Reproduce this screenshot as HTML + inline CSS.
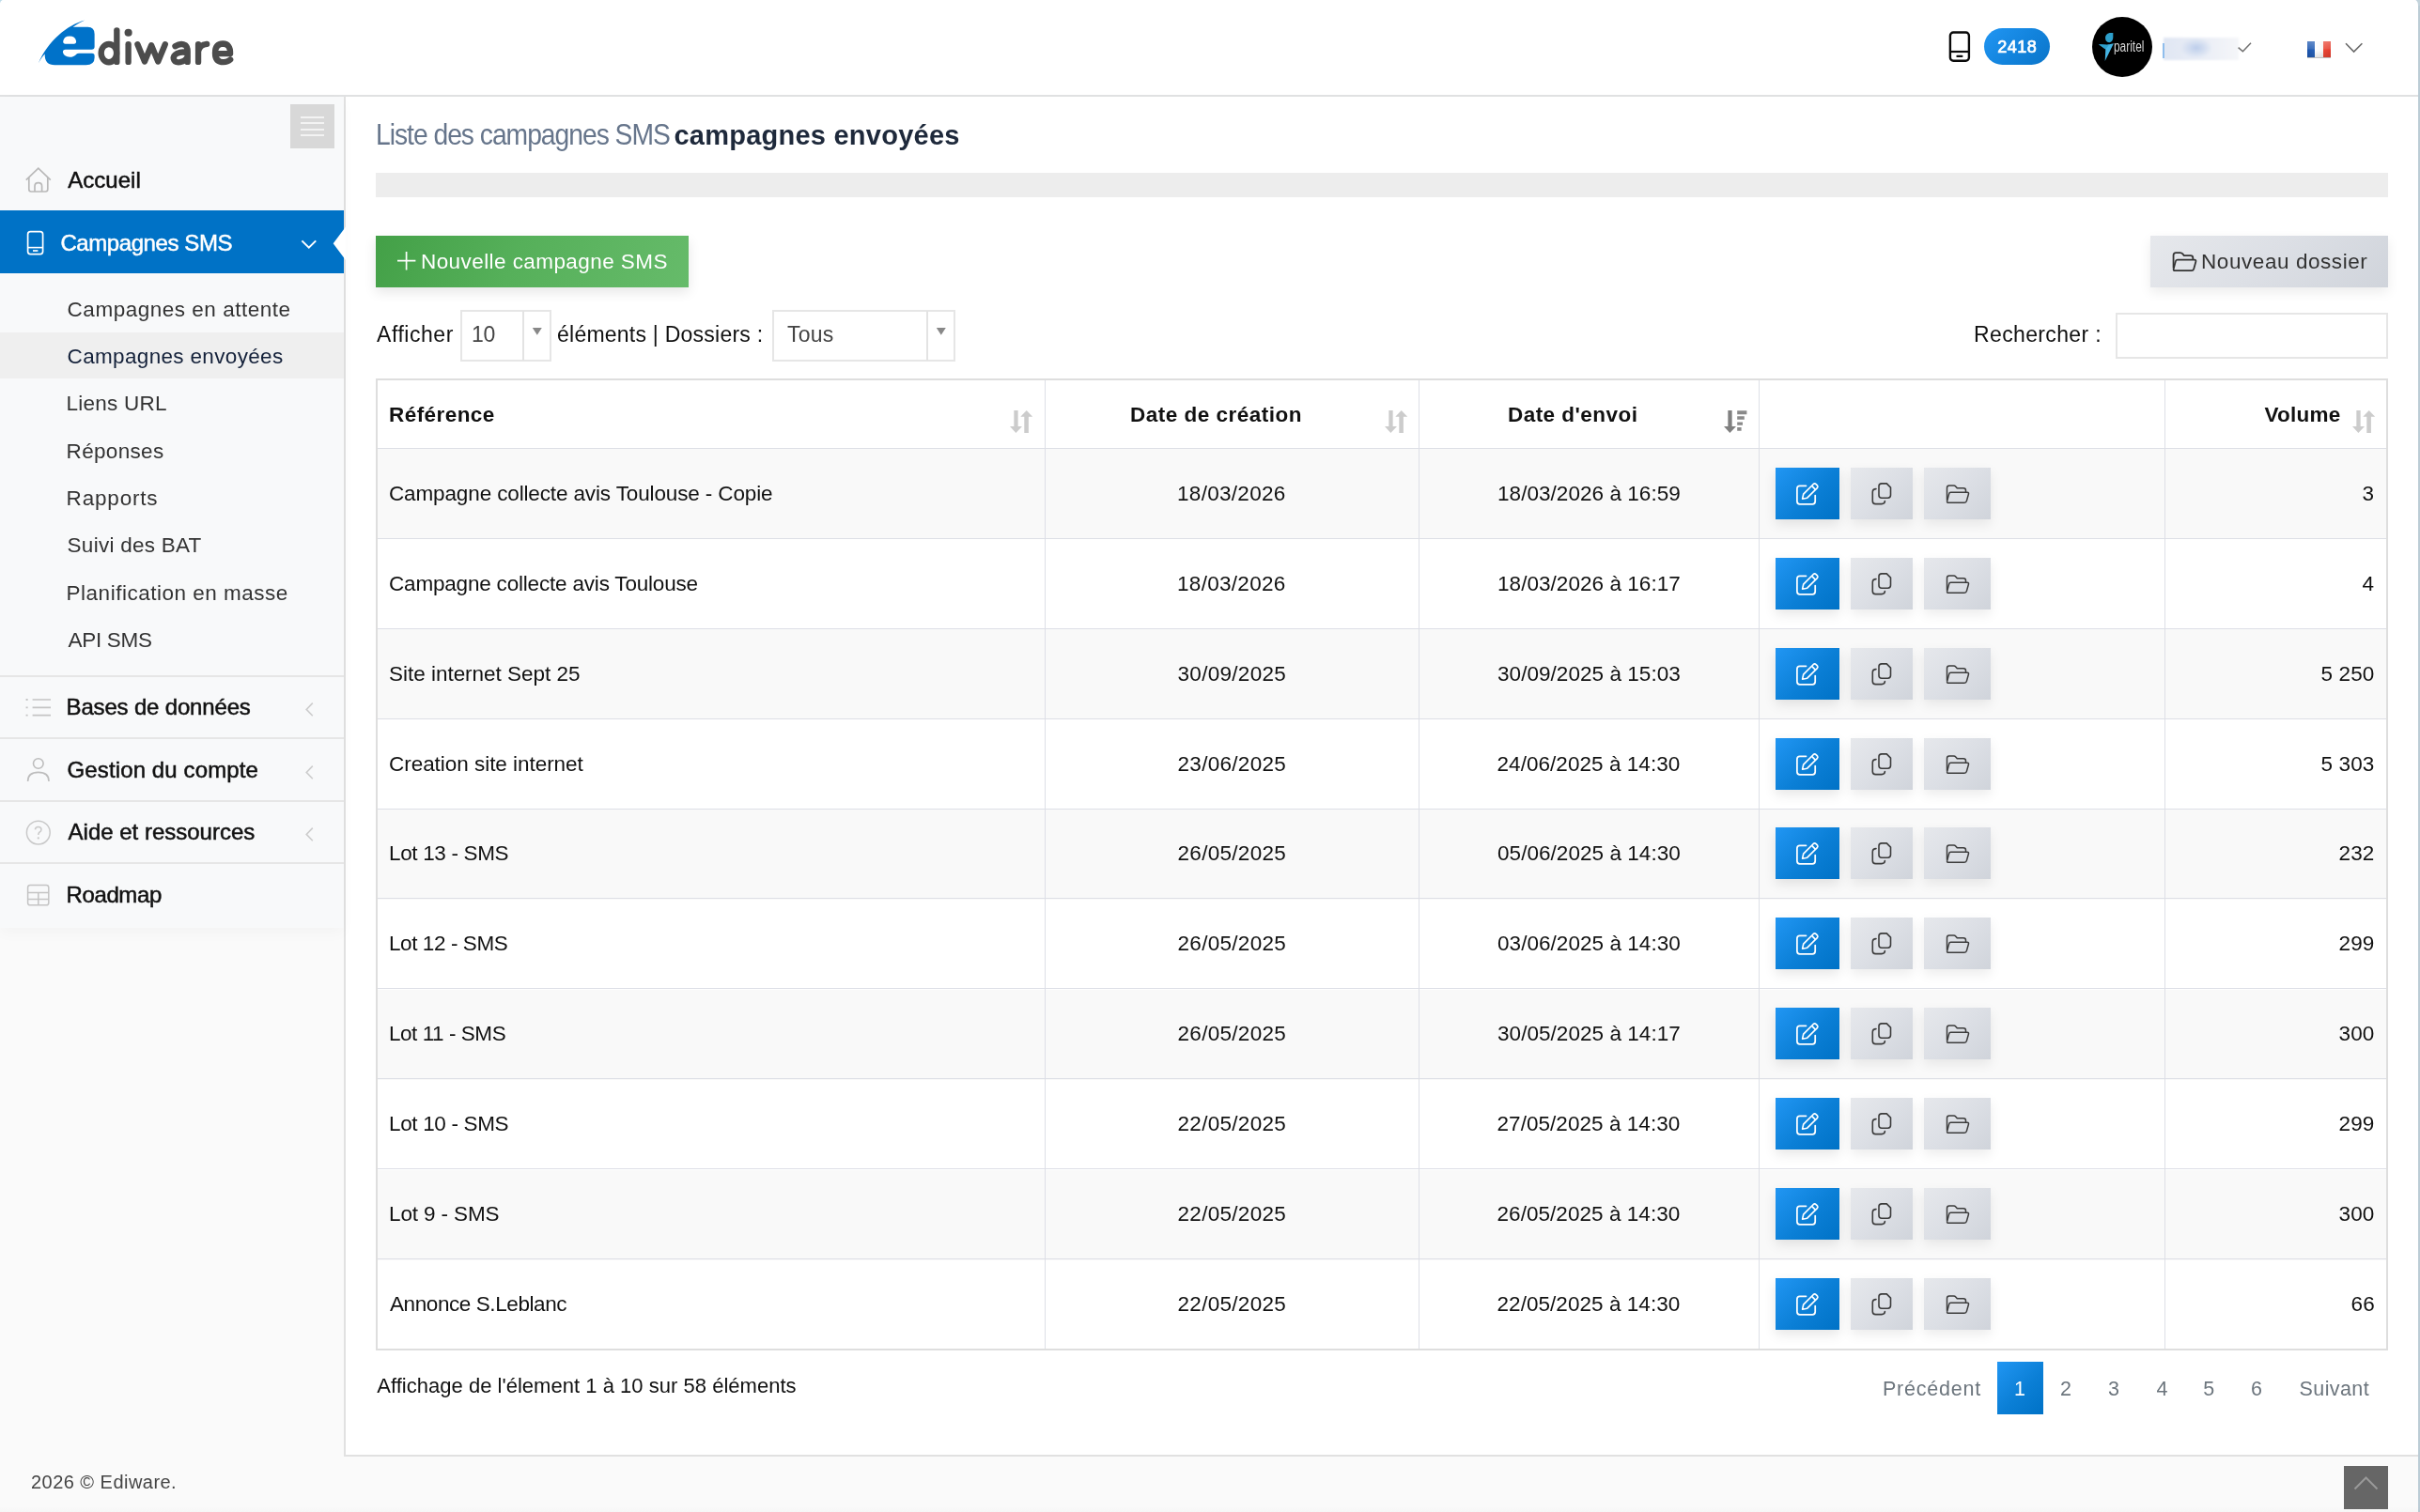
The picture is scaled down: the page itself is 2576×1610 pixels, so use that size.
<!DOCTYPE html>
<html lang="fr">
<head>
<meta charset="utf-8">
<title>Ediware - Campagnes SMS envoyées</title>
<style>
*{box-sizing:border-box}
html,body{margin:0;padding:0}
body{width:2576px;height:1610px;overflow:hidden;background:#fafafa;font-family:"Liberation Sans",sans-serif;position:relative}
.a{position:absolute}
.t{position:absolute;white-space:nowrap;line-height:1;transform-origin:0 0;z-index:5}
#hdr{left:0;top:0;width:2576px;height:103px;background:#fff;border-bottom:2px solid #e0e1e2}
#side{left:0;top:103px;width:366px;height:885px;background:#f8f9fa;box-shadow:0 6px 14px rgba(0,0,0,.028)}
#main{left:366px;top:103px;width:2208px;height:1448px;background:#fff;border-left:2px solid #e1e1e1;border-bottom:2px solid #e1e1e1}
.sep{left:0;width:366px;height:2px;background:#e6e6e6}
.row{left:402px;width:2138px;height:96px}
.odd{background:#f9f9f9}
.hl{left:402px;width:2138px;height:1px;background:#dddfe6}
.vl{top:405px;width:1px;height:1031px;background:#dddfe6}
.bb{width:68px;height:55px;background:linear-gradient(135deg,#2196f3 0%,#0b7fd6 55%,#0072c6 100%);box-shadow:0 5px 12px rgba(0,0,0,.10)}
.bg{height:55px;background:linear-gradient(135deg,#e6e8ec 0%,#dcdfe5 50%,#d0d4db 100%);box-shadow:0 5px 12px rgba(0,0,0,.08)}
svg{position:absolute;overflow:visible}
</style>
</head>
<body>
<!-- ===== HEADER ===== -->
<div class="a" id="hdr"></div>
<svg style="left:30px;top:10px" width="240" height="80" viewBox="0 0 2420 807"><path fill="#0072c9" fill-rule="evenodd" d="M610 115C420 165 210 340 110 578C130 540 155 500 178 478C175 560 215 597 285 597L620 597Q712 597 712 520L712 500Q712 472 685 472L545 472Q526 472 520 478Q490 512 445 512Q385 510 372 462Q370 430 400 430L680 430Q712 430 712 400L712 265Q712 188 640 188L480 188C520 160 565 135 610 115ZM375 340Q385 287 445 287Q505 287 515 340Q517 370 490 370L400 370Q372 370 375 340Z"/></svg>
<svg style="left:30px;top:10px" width="240" height="80" viewBox="0 0 2420 807"><g fill="none" stroke="#4c4c4c" stroke-width="64" stroke-linecap="round" stroke-linejoin="round"><ellipse cx="866" cy="470" rx="83" ry="97"/><path d="M951 226V564"/><path d="M1075 376V564"/><path d="M1174 376L1250 560L1322 386L1394 560L1470 376"/><path d="M1578 396Q1640 356 1688 386Q1711 406 1711 450V564M1711 466Q1650 450 1600 472Q1554 496 1561 532Q1572 574 1630 567Q1692 556 1711 506"/><path d="M1826 376V564M1826 450Q1840 380 1918 372"/><path d="M2014 476H2169Q2173 370 2090 368Q2007 370 2007 468Q2007 566 2097 566Q2142 566 2170 540"/></g><circle cx="1075" cy="250" r="41" fill="#4c4c4c"/></svg>
<!-- phone icon -->
<svg style="left:2072px;top:30px" width="30" height="40" viewBox="0 0 30 40"><rect x="3.9" y="4.5" width="20" height="30.2" rx="3.4" fill="none" stroke="#0a0a0a" stroke-width="2.4"/><path d="M4 25H24" stroke="#0a0a0a" stroke-width="2.2"/><path d="M11.4 29.9H16.4" stroke="#0a0a0a" stroke-width="2.2" stroke-linecap="round"/></svg>
<div class="a" style="left:2112px;top:30px;width:70px;height:39px;border-radius:20px;background:linear-gradient(135deg,#2196f3 0%,#1283dc 55%,#0b75c9 100%)"></div>
<!-- avatar -->
<div class="a" style="left:2227px;top:18px;width:64px;height:64px;border-radius:50%;background:#000"></div>
<svg style="left:2227px;top:18px" width="64" height="64" viewBox="0 0 64 64"><path fill="#2d9fcb" d="M22.3 17H18.6Q14 18.4 14 22.4Q14.4 27 18.6 27.2Q22 26.4 22.3 22Z"/><path fill="#44b4e3" d="M7 29.2L16 29.7L22.9 28.3L13.7 46.9L14.3 34.6Z"/><path fill="#2d9fcb" d="M7 29.2L16 29.7L18.4 29.2L14.3 34.6Z"/></svg>
<!-- blurred name -->
<div class="a" style="left:2303px;top:40px;width:80px;height:24px;background:radial-gradient(ellipse 17px 11px at 35px 11px,#bccdeb 0%,rgba(200,214,238,.6) 55%,rgba(220,228,243,0) 100%),linear-gradient(90deg,#e0e6f3 0%,#e6ebf5 30%,#edf0f7 65%,#f5f6f9 100%);filter:blur(1.2px)"></div>
<div class="a" style="left:2301.5px;top:46px;width:2px;height:16px;background:#8fbdec;filter:blur(.4px)"></div>
<svg style="left:2380px;top:42px" width="20" height="16" viewBox="0 0 20 16"><path d="M2.6 8.6L7.4 12.8L16 3.8" fill="none" stroke="#707070" stroke-width="1.5"/></svg>
<!-- flag -->
<div class="a" style="left:2456px;top:44px;width:25px;height:17px;background:linear-gradient(180deg,rgba(255,255,255,.28) 0%,rgba(255,255,255,.12) 45%,rgba(0,0,0,0) 55%,rgba(0,0,0,.10) 100%),linear-gradient(90deg,#1b55ae 0,#2a63b8 33%,#fff 34%,#f6f6f6 66%,#ec4a37 67%,#e23b2c 100%);box-shadow:0 1px 0 rgba(0,0,0,.25)"></div>
<svg style="left:2494px;top:43px" width="24" height="16" viewBox="0 0 24 16"><path d="M3 3.2L11.6 12L20.4 3.2" fill="none" stroke="#6a6a6a" stroke-width="1.6"/></svg>

<!-- ===== MAIN AREA ===== -->
<div class="a" id="main"></div>
<div class="a" style="left:400px;top:184px;width:2142px;height:26px;background:#ededed"></div>
<!-- green button -->
<div class="a" style="left:400px;top:251px;width:333px;height:55px;background:linear-gradient(115deg,#43a047 0%,#56b05a 45%,#66bb6a 100%);box-shadow:0 5px 12px rgba(0,0,0,.10)"></div>
<svg style="left:422px;top:267px" width="22" height="22" viewBox="0 0 22 22"><path d="M10.6 1V20.4M1 10.7H20.4" stroke="#fff" stroke-width="1.7" fill="none"/></svg>
<!-- nouveau dossier -->
<div class="a" style="left:2289px;top:251px;width:253px;height:55px;background:linear-gradient(135deg,#e6e8ec 0%,#dcdfe5 50%,#d0d4db 100%);box-shadow:0 5px 12px rgba(0,0,0,.08)"></div>
<svg style="left:2312px;top:267px" width="27" height="23" viewBox="0 0 26 22"><path d="M1.5 17.8V4.5Q1.5 2 4 2H8.5Q10 2 11 3.2L12.3 4.8H19Q21.5 4.8 21.5 7.3V9" fill="none" stroke="#333" stroke-width="1.7"/><path d="M5.5 9.2H23Q25 9.2 24.4 11.2L22.4 18.4Q21.9 20.3 20 20.3H3.2Q1 20.3 1.7 18.2L3.6 11Q4 9.2 5.5 9.2Z" fill="none" stroke="#333" stroke-width="1.7"/></svg>
<!-- selects -->
<div class="a" style="left:490px;top:330px;width:97px;height:55px;background:#fff;border:2px solid #e6e6e6"></div>
<div class="a" style="left:556px;top:331px;width:2px;height:53px;background:#e3e3e3"></div>
<svg style="left:566px;top:348px" width="12" height="10" viewBox="0 0 12 10"><path d="M0.8 1H10.8L5.8 8.8Z" fill="#888"/></svg>
<div class="a" style="left:822px;top:330px;width:195px;height:55px;background:#fff;border:2px solid #e6e6e6"></div>
<div class="a" style="left:986px;top:331px;width:2px;height:53px;background:#e3e3e3"></div>
<svg style="left:996px;top:348px" width="12" height="10" viewBox="0 0 12 10"><path d="M0.8 1H10.8L5.8 8.8Z" fill="#888"/></svg>
<div class="a" style="left:2252px;top:333px;width:290px;height:49px;background:#fff;border:2px solid #e6e6e6"></div>

<!-- ===== TABLE ===== -->
<div class="a" style="left:400px;top:403px;width:2142px;height:1035px;border:2px solid #dedede;background:#fff"></div>
<div class="a row odd" style="top:478px"></div>
<div class="a row odd" style="top:670px"></div>
<div class="a row odd" style="top:862px"></div>
<div class="a row odd" style="top:1054px"></div>
<div class="a row odd" style="top:1246px"></div>
<div class="a hl" style="top:477px"></div>
<div class="a hl" style="top:573px"></div>
<div class="a hl" style="top:669px"></div>
<div class="a hl" style="top:765px"></div>
<div class="a hl" style="top:861px"></div>
<div class="a hl" style="top:956px"></div>
<div class="a hl" style="top:1052px"></div>
<div class="a hl" style="top:1148px"></div>
<div class="a hl" style="top:1244px"></div>
<div class="a hl" style="top:1340px"></div>
<div class="a vl" style="left:1112px"></div>
<div class="a vl" style="left:1510px"></div>
<div class="a vl" style="left:1872px"></div>
<div class="a vl" style="left:2304px"></div>
<svg style="left:1075px;top:436px" width="25" height="26" viewBox="0 0 25 26"><path d="M4.35 1H8.65V18H13L6.4 25L0 18H4.35Z" fill="#ccc"/><path d="M15.3 25H19.9V7.8H24.2L17.7 0.9L11.3 7.8H15.3Z" fill="#ccc"/></svg>
<svg style="left:1474px;top:436px" width="25" height="26" viewBox="0 0 25 26"><path d="M4.35 1H8.65V18H13L6.4 25L0 18H4.35Z" fill="#ccc"/><path d="M15.3 25H19.9V7.8H24.2L17.7 0.9L11.3 7.8H15.3Z" fill="#ccc"/></svg>
<svg style="left:2504px;top:436px" width="25" height="26" viewBox="0 0 25 26"><path d="M4.35 1H8.65V18H13L6.4 25L0 18H4.35Z" fill="#ccc"/><path d="M15.3 25H19.9V7.8H24.2L17.7 0.9L11.3 7.8H15.3Z" fill="#ccc"/></svg>
<svg style="left:1835px;top:436px" width="26" height="26" viewBox="0 0 26 26"><path d="M4.35 1H8.65V18H13L6.4 25L0 18H4.35Z" fill="#808080"/><path d="M14.2 1.2H24.4V5.2H14.2ZM14.2 7.2H21.8V10.8H14.2ZM14.2 13.4H20V16.7H14.2ZM14.2 19H18.6V22.7H14.2Z" fill="#8a8a8a"/></svg>
<div class="a bb" style="left:1890px;top:498px"></div>
<div class="a bg" style="left:1970px;top:498px;width:66px"></div>
<div class="a bg" style="left:2048px;top:498px;width:71px"></div>
<svg style="left:1912px;top:514px" width="24" height="24" viewBox="0 0 24 24"><path d="M10.5 3.3H3.8Q0.9 3.3 0.9 6.3V19.8Q0.9 22.8 3.8 22.8H17.3Q20.2 22.8 20.2 19.8V13.6" fill="none" stroke="#fff" stroke-width="1.75" stroke-linecap="round"/><path d="M6.6 17.2L7.7 12.1L18.3 1.5Q19.7 0.3 21.1 1.6L22.4 2.9Q23.6 4.3 22.3 5.7L11.7 16.2Z" fill="none" stroke="#fff" stroke-width="1.65" stroke-linejoin="round"/><path d="M16.6 3.4L20.5 7.3" stroke="#fff" stroke-width="1.7"/></svg>
<svg style="left:1992px;top:514px" width="22" height="24" viewBox="0 0 22 24"><path d="M8 3.7Q8 0.9 11 0.9H16.3L20.5 5.1V13.3Q20.5 16.2 17.5 16.2H11Q8 16.2 8 13.2Z" fill="none" stroke="#3c3c3c" stroke-width="1.6" stroke-linejoin="round"/><path d="M5 6.6Q1.3 6.6 1.3 10V19.4Q1.3 22.6 4.5 22.6H11Q14.4 22.6 14.4 19.6" fill="none" stroke="#3c3c3c" stroke-width="1.6" stroke-linecap="round"/></svg>
<svg style="left:2071px;top:515px" width="26" height="22" viewBox="0 0 26 22"><path d="M1.5 17.8V4.5Q1.5 2 4 2H8.5Q10 2 11 3.2L12.3 4.8H19Q21.5 4.8 21.5 7.3V9" fill="none" stroke="#3c3c3c" stroke-width="1.5"/><path d="M5.5 9.2H23Q25 9.2 24.4 11.2L22.4 18.4Q21.9 20.3 20 20.3H3.2Q1 20.3 1.7 18.2L3.6 11Q4 9.2 5.5 9.2Z" fill="none" stroke="#3c3c3c" stroke-width="1.5"/></svg>
<div class="a bb" style="left:1890px;top:594px"></div>
<div class="a bg" style="left:1970px;top:594px;width:66px"></div>
<div class="a bg" style="left:2048px;top:594px;width:71px"></div>
<svg style="left:1912px;top:610px" width="24" height="24" viewBox="0 0 24 24"><path d="M10.5 3.3H3.8Q0.9 3.3 0.9 6.3V19.8Q0.9 22.8 3.8 22.8H17.3Q20.2 22.8 20.2 19.8V13.6" fill="none" stroke="#fff" stroke-width="1.75" stroke-linecap="round"/><path d="M6.6 17.2L7.7 12.1L18.3 1.5Q19.7 0.3 21.1 1.6L22.4 2.9Q23.6 4.3 22.3 5.7L11.7 16.2Z" fill="none" stroke="#fff" stroke-width="1.65" stroke-linejoin="round"/><path d="M16.6 3.4L20.5 7.3" stroke="#fff" stroke-width="1.7"/></svg>
<svg style="left:1992px;top:610px" width="22" height="24" viewBox="0 0 22 24"><path d="M8 3.7Q8 0.9 11 0.9H16.3L20.5 5.1V13.3Q20.5 16.2 17.5 16.2H11Q8 16.2 8 13.2Z" fill="none" stroke="#3c3c3c" stroke-width="1.6" stroke-linejoin="round"/><path d="M5 6.6Q1.3 6.6 1.3 10V19.4Q1.3 22.6 4.5 22.6H11Q14.4 22.6 14.4 19.6" fill="none" stroke="#3c3c3c" stroke-width="1.6" stroke-linecap="round"/></svg>
<svg style="left:2071px;top:611px" width="26" height="22" viewBox="0 0 26 22"><path d="M1.5 17.8V4.5Q1.5 2 4 2H8.5Q10 2 11 3.2L12.3 4.8H19Q21.5 4.8 21.5 7.3V9" fill="none" stroke="#3c3c3c" stroke-width="1.5"/><path d="M5.5 9.2H23Q25 9.2 24.4 11.2L22.4 18.4Q21.9 20.3 20 20.3H3.2Q1 20.3 1.7 18.2L3.6 11Q4 9.2 5.5 9.2Z" fill="none" stroke="#3c3c3c" stroke-width="1.5"/></svg>
<div class="a bb" style="left:1890px;top:690px"></div>
<div class="a bg" style="left:1970px;top:690px;width:66px"></div>
<div class="a bg" style="left:2048px;top:690px;width:71px"></div>
<svg style="left:1912px;top:706px" width="24" height="24" viewBox="0 0 24 24"><path d="M10.5 3.3H3.8Q0.9 3.3 0.9 6.3V19.8Q0.9 22.8 3.8 22.8H17.3Q20.2 22.8 20.2 19.8V13.6" fill="none" stroke="#fff" stroke-width="1.75" stroke-linecap="round"/><path d="M6.6 17.2L7.7 12.1L18.3 1.5Q19.7 0.3 21.1 1.6L22.4 2.9Q23.6 4.3 22.3 5.7L11.7 16.2Z" fill="none" stroke="#fff" stroke-width="1.65" stroke-linejoin="round"/><path d="M16.6 3.4L20.5 7.3" stroke="#fff" stroke-width="1.7"/></svg>
<svg style="left:1992px;top:706px" width="22" height="24" viewBox="0 0 22 24"><path d="M8 3.7Q8 0.9 11 0.9H16.3L20.5 5.1V13.3Q20.5 16.2 17.5 16.2H11Q8 16.2 8 13.2Z" fill="none" stroke="#3c3c3c" stroke-width="1.6" stroke-linejoin="round"/><path d="M5 6.6Q1.3 6.6 1.3 10V19.4Q1.3 22.6 4.5 22.6H11Q14.4 22.6 14.4 19.6" fill="none" stroke="#3c3c3c" stroke-width="1.6" stroke-linecap="round"/></svg>
<svg style="left:2071px;top:707px" width="26" height="22" viewBox="0 0 26 22"><path d="M1.5 17.8V4.5Q1.5 2 4 2H8.5Q10 2 11 3.2L12.3 4.8H19Q21.5 4.8 21.5 7.3V9" fill="none" stroke="#3c3c3c" stroke-width="1.5"/><path d="M5.5 9.2H23Q25 9.2 24.4 11.2L22.4 18.4Q21.9 20.3 20 20.3H3.2Q1 20.3 1.7 18.2L3.6 11Q4 9.2 5.5 9.2Z" fill="none" stroke="#3c3c3c" stroke-width="1.5"/></svg>
<div class="a bb" style="left:1890px;top:786px"></div>
<div class="a bg" style="left:1970px;top:786px;width:66px"></div>
<div class="a bg" style="left:2048px;top:786px;width:71px"></div>
<svg style="left:1912px;top:802px" width="24" height="24" viewBox="0 0 24 24"><path d="M10.5 3.3H3.8Q0.9 3.3 0.9 6.3V19.8Q0.9 22.8 3.8 22.8H17.3Q20.2 22.8 20.2 19.8V13.6" fill="none" stroke="#fff" stroke-width="1.75" stroke-linecap="round"/><path d="M6.6 17.2L7.7 12.1L18.3 1.5Q19.7 0.3 21.1 1.6L22.4 2.9Q23.6 4.3 22.3 5.7L11.7 16.2Z" fill="none" stroke="#fff" stroke-width="1.65" stroke-linejoin="round"/><path d="M16.6 3.4L20.5 7.3" stroke="#fff" stroke-width="1.7"/></svg>
<svg style="left:1992px;top:802px" width="22" height="24" viewBox="0 0 22 24"><path d="M8 3.7Q8 0.9 11 0.9H16.3L20.5 5.1V13.3Q20.5 16.2 17.5 16.2H11Q8 16.2 8 13.2Z" fill="none" stroke="#3c3c3c" stroke-width="1.6" stroke-linejoin="round"/><path d="M5 6.6Q1.3 6.6 1.3 10V19.4Q1.3 22.6 4.5 22.6H11Q14.4 22.6 14.4 19.6" fill="none" stroke="#3c3c3c" stroke-width="1.6" stroke-linecap="round"/></svg>
<svg style="left:2071px;top:803px" width="26" height="22" viewBox="0 0 26 22"><path d="M1.5 17.8V4.5Q1.5 2 4 2H8.5Q10 2 11 3.2L12.3 4.8H19Q21.5 4.8 21.5 7.3V9" fill="none" stroke="#3c3c3c" stroke-width="1.5"/><path d="M5.5 9.2H23Q25 9.2 24.4 11.2L22.4 18.4Q21.9 20.3 20 20.3H3.2Q1 20.3 1.7 18.2L3.6 11Q4 9.2 5.5 9.2Z" fill="none" stroke="#3c3c3c" stroke-width="1.5"/></svg>
<div class="a bb" style="left:1890px;top:881px"></div>
<div class="a bg" style="left:1970px;top:881px;width:66px"></div>
<div class="a bg" style="left:2048px;top:881px;width:71px"></div>
<svg style="left:1912px;top:897px" width="24" height="24" viewBox="0 0 24 24"><path d="M10.5 3.3H3.8Q0.9 3.3 0.9 6.3V19.8Q0.9 22.8 3.8 22.8H17.3Q20.2 22.8 20.2 19.8V13.6" fill="none" stroke="#fff" stroke-width="1.75" stroke-linecap="round"/><path d="M6.6 17.2L7.7 12.1L18.3 1.5Q19.7 0.3 21.1 1.6L22.4 2.9Q23.6 4.3 22.3 5.7L11.7 16.2Z" fill="none" stroke="#fff" stroke-width="1.65" stroke-linejoin="round"/><path d="M16.6 3.4L20.5 7.3" stroke="#fff" stroke-width="1.7"/></svg>
<svg style="left:1992px;top:897px" width="22" height="24" viewBox="0 0 22 24"><path d="M8 3.7Q8 0.9 11 0.9H16.3L20.5 5.1V13.3Q20.5 16.2 17.5 16.2H11Q8 16.2 8 13.2Z" fill="none" stroke="#3c3c3c" stroke-width="1.6" stroke-linejoin="round"/><path d="M5 6.6Q1.3 6.6 1.3 10V19.4Q1.3 22.6 4.5 22.6H11Q14.4 22.6 14.4 19.6" fill="none" stroke="#3c3c3c" stroke-width="1.6" stroke-linecap="round"/></svg>
<svg style="left:2071px;top:898px" width="26" height="22" viewBox="0 0 26 22"><path d="M1.5 17.8V4.5Q1.5 2 4 2H8.5Q10 2 11 3.2L12.3 4.8H19Q21.5 4.8 21.5 7.3V9" fill="none" stroke="#3c3c3c" stroke-width="1.5"/><path d="M5.5 9.2H23Q25 9.2 24.4 11.2L22.4 18.4Q21.9 20.3 20 20.3H3.2Q1 20.3 1.7 18.2L3.6 11Q4 9.2 5.5 9.2Z" fill="none" stroke="#3c3c3c" stroke-width="1.5"/></svg>
<div class="a bb" style="left:1890px;top:977px"></div>
<div class="a bg" style="left:1970px;top:977px;width:66px"></div>
<div class="a bg" style="left:2048px;top:977px;width:71px"></div>
<svg style="left:1912px;top:993px" width="24" height="24" viewBox="0 0 24 24"><path d="M10.5 3.3H3.8Q0.9 3.3 0.9 6.3V19.8Q0.9 22.8 3.8 22.8H17.3Q20.2 22.8 20.2 19.8V13.6" fill="none" stroke="#fff" stroke-width="1.75" stroke-linecap="round"/><path d="M6.6 17.2L7.7 12.1L18.3 1.5Q19.7 0.3 21.1 1.6L22.4 2.9Q23.6 4.3 22.3 5.7L11.7 16.2Z" fill="none" stroke="#fff" stroke-width="1.65" stroke-linejoin="round"/><path d="M16.6 3.4L20.5 7.3" stroke="#fff" stroke-width="1.7"/></svg>
<svg style="left:1992px;top:993px" width="22" height="24" viewBox="0 0 22 24"><path d="M8 3.7Q8 0.9 11 0.9H16.3L20.5 5.1V13.3Q20.5 16.2 17.5 16.2H11Q8 16.2 8 13.2Z" fill="none" stroke="#3c3c3c" stroke-width="1.6" stroke-linejoin="round"/><path d="M5 6.6Q1.3 6.6 1.3 10V19.4Q1.3 22.6 4.5 22.6H11Q14.4 22.6 14.4 19.6" fill="none" stroke="#3c3c3c" stroke-width="1.6" stroke-linecap="round"/></svg>
<svg style="left:2071px;top:994px" width="26" height="22" viewBox="0 0 26 22"><path d="M1.5 17.8V4.5Q1.5 2 4 2H8.5Q10 2 11 3.2L12.3 4.8H19Q21.5 4.8 21.5 7.3V9" fill="none" stroke="#3c3c3c" stroke-width="1.5"/><path d="M5.5 9.2H23Q25 9.2 24.4 11.2L22.4 18.4Q21.9 20.3 20 20.3H3.2Q1 20.3 1.7 18.2L3.6 11Q4 9.2 5.5 9.2Z" fill="none" stroke="#3c3c3c" stroke-width="1.5"/></svg>
<div class="a bb" style="left:1890px;top:1073px"></div>
<div class="a bg" style="left:1970px;top:1073px;width:66px"></div>
<div class="a bg" style="left:2048px;top:1073px;width:71px"></div>
<svg style="left:1912px;top:1089px" width="24" height="24" viewBox="0 0 24 24"><path d="M10.5 3.3H3.8Q0.9 3.3 0.9 6.3V19.8Q0.9 22.8 3.8 22.8H17.3Q20.2 22.8 20.2 19.8V13.6" fill="none" stroke="#fff" stroke-width="1.75" stroke-linecap="round"/><path d="M6.6 17.2L7.7 12.1L18.3 1.5Q19.7 0.3 21.1 1.6L22.4 2.9Q23.6 4.3 22.3 5.7L11.7 16.2Z" fill="none" stroke="#fff" stroke-width="1.65" stroke-linejoin="round"/><path d="M16.6 3.4L20.5 7.3" stroke="#fff" stroke-width="1.7"/></svg>
<svg style="left:1992px;top:1089px" width="22" height="24" viewBox="0 0 22 24"><path d="M8 3.7Q8 0.9 11 0.9H16.3L20.5 5.1V13.3Q20.5 16.2 17.5 16.2H11Q8 16.2 8 13.2Z" fill="none" stroke="#3c3c3c" stroke-width="1.6" stroke-linejoin="round"/><path d="M5 6.6Q1.3 6.6 1.3 10V19.4Q1.3 22.6 4.5 22.6H11Q14.4 22.6 14.4 19.6" fill="none" stroke="#3c3c3c" stroke-width="1.6" stroke-linecap="round"/></svg>
<svg style="left:2071px;top:1090px" width="26" height="22" viewBox="0 0 26 22"><path d="M1.5 17.8V4.5Q1.5 2 4 2H8.5Q10 2 11 3.2L12.3 4.8H19Q21.5 4.8 21.5 7.3V9" fill="none" stroke="#3c3c3c" stroke-width="1.5"/><path d="M5.5 9.2H23Q25 9.2 24.4 11.2L22.4 18.4Q21.9 20.3 20 20.3H3.2Q1 20.3 1.7 18.2L3.6 11Q4 9.2 5.5 9.2Z" fill="none" stroke="#3c3c3c" stroke-width="1.5"/></svg>
<div class="a bb" style="left:1890px;top:1169px"></div>
<div class="a bg" style="left:1970px;top:1169px;width:66px"></div>
<div class="a bg" style="left:2048px;top:1169px;width:71px"></div>
<svg style="left:1912px;top:1185px" width="24" height="24" viewBox="0 0 24 24"><path d="M10.5 3.3H3.8Q0.9 3.3 0.9 6.3V19.8Q0.9 22.8 3.8 22.8H17.3Q20.2 22.8 20.2 19.8V13.6" fill="none" stroke="#fff" stroke-width="1.75" stroke-linecap="round"/><path d="M6.6 17.2L7.7 12.1L18.3 1.5Q19.7 0.3 21.1 1.6L22.4 2.9Q23.6 4.3 22.3 5.7L11.7 16.2Z" fill="none" stroke="#fff" stroke-width="1.65" stroke-linejoin="round"/><path d="M16.6 3.4L20.5 7.3" stroke="#fff" stroke-width="1.7"/></svg>
<svg style="left:1992px;top:1185px" width="22" height="24" viewBox="0 0 22 24"><path d="M8 3.7Q8 0.9 11 0.9H16.3L20.5 5.1V13.3Q20.5 16.2 17.5 16.2H11Q8 16.2 8 13.2Z" fill="none" stroke="#3c3c3c" stroke-width="1.6" stroke-linejoin="round"/><path d="M5 6.6Q1.3 6.6 1.3 10V19.4Q1.3 22.6 4.5 22.6H11Q14.4 22.6 14.4 19.6" fill="none" stroke="#3c3c3c" stroke-width="1.6" stroke-linecap="round"/></svg>
<svg style="left:2071px;top:1186px" width="26" height="22" viewBox="0 0 26 22"><path d="M1.5 17.8V4.5Q1.5 2 4 2H8.5Q10 2 11 3.2L12.3 4.8H19Q21.5 4.8 21.5 7.3V9" fill="none" stroke="#3c3c3c" stroke-width="1.5"/><path d="M5.5 9.2H23Q25 9.2 24.4 11.2L22.4 18.4Q21.9 20.3 20 20.3H3.2Q1 20.3 1.7 18.2L3.6 11Q4 9.2 5.5 9.2Z" fill="none" stroke="#3c3c3c" stroke-width="1.5"/></svg>
<div class="a bb" style="left:1890px;top:1265px"></div>
<div class="a bg" style="left:1970px;top:1265px;width:66px"></div>
<div class="a bg" style="left:2048px;top:1265px;width:71px"></div>
<svg style="left:1912px;top:1281px" width="24" height="24" viewBox="0 0 24 24"><path d="M10.5 3.3H3.8Q0.9 3.3 0.9 6.3V19.8Q0.9 22.8 3.8 22.8H17.3Q20.2 22.8 20.2 19.8V13.6" fill="none" stroke="#fff" stroke-width="1.75" stroke-linecap="round"/><path d="M6.6 17.2L7.7 12.1L18.3 1.5Q19.7 0.3 21.1 1.6L22.4 2.9Q23.6 4.3 22.3 5.7L11.7 16.2Z" fill="none" stroke="#fff" stroke-width="1.65" stroke-linejoin="round"/><path d="M16.6 3.4L20.5 7.3" stroke="#fff" stroke-width="1.7"/></svg>
<svg style="left:1992px;top:1281px" width="22" height="24" viewBox="0 0 22 24"><path d="M8 3.7Q8 0.9 11 0.9H16.3L20.5 5.1V13.3Q20.5 16.2 17.5 16.2H11Q8 16.2 8 13.2Z" fill="none" stroke="#3c3c3c" stroke-width="1.6" stroke-linejoin="round"/><path d="M5 6.6Q1.3 6.6 1.3 10V19.4Q1.3 22.6 4.5 22.6H11Q14.4 22.6 14.4 19.6" fill="none" stroke="#3c3c3c" stroke-width="1.6" stroke-linecap="round"/></svg>
<svg style="left:2071px;top:1282px" width="26" height="22" viewBox="0 0 26 22"><path d="M1.5 17.8V4.5Q1.5 2 4 2H8.5Q10 2 11 3.2L12.3 4.8H19Q21.5 4.8 21.5 7.3V9" fill="none" stroke="#3c3c3c" stroke-width="1.5"/><path d="M5.5 9.2H23Q25 9.2 24.4 11.2L22.4 18.4Q21.9 20.3 20 20.3H3.2Q1 20.3 1.7 18.2L3.6 11Q4 9.2 5.5 9.2Z" fill="none" stroke="#3c3c3c" stroke-width="1.5"/></svg>
<div class="a bb" style="left:1890px;top:1361px"></div>
<div class="a bg" style="left:1970px;top:1361px;width:66px"></div>
<div class="a bg" style="left:2048px;top:1361px;width:71px"></div>
<svg style="left:1912px;top:1377px" width="24" height="24" viewBox="0 0 24 24"><path d="M10.5 3.3H3.8Q0.9 3.3 0.9 6.3V19.8Q0.9 22.8 3.8 22.8H17.3Q20.2 22.8 20.2 19.8V13.6" fill="none" stroke="#fff" stroke-width="1.75" stroke-linecap="round"/><path d="M6.6 17.2L7.7 12.1L18.3 1.5Q19.7 0.3 21.1 1.6L22.4 2.9Q23.6 4.3 22.3 5.7L11.7 16.2Z" fill="none" stroke="#fff" stroke-width="1.65" stroke-linejoin="round"/><path d="M16.6 3.4L20.5 7.3" stroke="#fff" stroke-width="1.7"/></svg>
<svg style="left:1992px;top:1377px" width="22" height="24" viewBox="0 0 22 24"><path d="M8 3.7Q8 0.9 11 0.9H16.3L20.5 5.1V13.3Q20.5 16.2 17.5 16.2H11Q8 16.2 8 13.2Z" fill="none" stroke="#3c3c3c" stroke-width="1.6" stroke-linejoin="round"/><path d="M5 6.6Q1.3 6.6 1.3 10V19.4Q1.3 22.6 4.5 22.6H11Q14.4 22.6 14.4 19.6" fill="none" stroke="#3c3c3c" stroke-width="1.6" stroke-linecap="round"/></svg>
<svg style="left:2071px;top:1378px" width="26" height="22" viewBox="0 0 26 22"><path d="M1.5 17.8V4.5Q1.5 2 4 2H8.5Q10 2 11 3.2L12.3 4.8H19Q21.5 4.8 21.5 7.3V9" fill="none" stroke="#3c3c3c" stroke-width="1.5"/><path d="M5.5 9.2H23Q25 9.2 24.4 11.2L22.4 18.4Q21.9 20.3 20 20.3H3.2Q1 20.3 1.7 18.2L3.6 11Q4 9.2 5.5 9.2Z" fill="none" stroke="#3c3c3c" stroke-width="1.5"/></svg>
<!-- pagination active -->
<div class="a" style="left:2126px;top:1450px;width:49px;height:56px;background:linear-gradient(135deg,#2196f3 0%,#0b7fd6 55%,#0072c6 100%)"></div>
<!-- scroll top -->
<div class="a" style="left:2495px;top:1561px;width:47px;height:46px;background:#666"></div>
<svg style="left:2495px;top:1561px" width="47" height="46" viewBox="0 0 47 46"><path d="M11.5 24.5L23.5 12.5L35.5 24.5" fill="none" stroke="#999" stroke-width="2"/></svg>

<!-- ===== SIDEBAR ===== -->
<div class="a" id="side"></div>
<div class="a" style="left:309px;top:111px;width:47px;height:47px;background:#d8d8d8"></div>
<div class="a" style="left:320px;top:123.6px;width:25px;height:2px;background:#f3f3f3"></div>
<div class="a" style="left:320px;top:130px;width:25px;height:2px;background:#f3f3f3"></div>
<div class="a" style="left:320px;top:136.6px;width:25px;height:2px;background:#f3f3f3"></div>
<div class="a" style="left:320px;top:143px;width:25px;height:2px;background:#f3f3f3"></div>
<!-- home -->
<svg style="left:26px;top:176px" width="30" height="30" viewBox="0 0 30 30"><path d="M1.8 15.6L14.8 3.2L27.8 15.6" fill="none" stroke="#b9b9b9" stroke-width="1.7"/><path d="M4.8 13V25.6Q4.8 28 7.2 28H22.4Q24.8 28 24.8 25.6V13" fill="none" stroke="#b9b9b9" stroke-width="1.7"/><path d="M11 28V22.2Q11 18.6 14.8 18.6Q18.6 18.6 18.6 22.2V28" fill="none" stroke="#b9b9b9" stroke-width="1.7"/></svg>
<!-- active item -->
<div class="a" style="left:0;top:224px;width:366px;height:67px;background:#0072c6"></div>
<svg style="left:352px;top:240px" width="16" height="40" viewBox="0 0 16 40"><path d="M16 1.5L2.7 19.3L16 37Z" fill="#fff"/></svg>
<svg style="left:26px;top:243px" width="24" height="32" viewBox="0 0 24 32"><rect x="3.6" y="3.6" width="16" height="24" rx="2.8" fill="none" stroke="#fff" stroke-width="1.7"/><path d="M3.6 20.6H19.6" stroke="#fff" stroke-width="1.6"/><path d="M9 24H14.4" stroke="#fff" stroke-width="1.7"/></svg>
<svg style="left:318px;top:252px" width="22" height="16" viewBox="0 0 22 16"><path d="M3.4 4.4L10.8 11.6L18.2 4.4" fill="none" stroke="#fff" stroke-width="2"/></svg>
<!-- active sub -->
<div class="a" style="left:0;top:354px;width:366px;height:49px;background:#efefef"></div>
<div class="a sep" style="top:718.5px"></div>
<div class="a sep" style="top:785px"></div>
<div class="a sep" style="top:852px"></div>
<div class="a sep" style="top:918.3px"></div>
<!-- list icon -->
<svg style="left:26px;top:740px" width="30" height="28" viewBox="0 0 30 28"><path d="M8.6 5H28M8.6 13.4H28M8.6 21.6H28" stroke="#c4c4c4" stroke-width="1.6" fill="none"/><path d="M1.6 5H3.6M1.6 13.4H3.6M1.6 21.6H3.6" stroke="#c4c4c4" stroke-width="1.8" fill="none"/></svg>
<!-- user icon -->
<svg style="left:26px;top:804px" width="30" height="32" viewBox="0 0 30 32"><circle cx="14.8" cy="9" r="5.3" fill="none" stroke="#bdbdbd" stroke-width="1.6"/><path d="M3.6 28Q3.6 18.4 14.8 18.4Q26 18.4 26 28" fill="none" stroke="#bdbdbd" stroke-width="1.6"/></svg>
<!-- help icon -->
<svg style="left:26px;top:872px" width="30" height="30" viewBox="0 0 30 30"><circle cx="14.8" cy="14.6" r="12.4" fill="none" stroke="#c9c9c9" stroke-width="1.5"/><path d="M11.4 11.4Q11.6 8.4 14.8 8.4Q18 8.4 18 11.2Q18 13 16.2 14Q14.8 14.8 14.8 17" fill="none" stroke="#c9c9c9" stroke-width="1.5"/><circle cx="14.8" cy="20.4" r="1.1" fill="#c9c9c9"/></svg>
<!-- table icon -->
<svg style="left:26px;top:939px" width="30" height="28" viewBox="0 0 30 28"><rect x="3.6" y="3.4" width="22.2" height="21.4" rx="2.6" fill="none" stroke="#c4c4c4" stroke-width="1.5"/><path d="M3.6 11.4H25.8M3.6 18.4H25.8M14.8 11.4V24.8" stroke="#c4c4c4" stroke-width="1.5" fill="none"/></svg>
<!-- chevrons -->
<svg style="left:322px;top:744px" width="14" height="20" viewBox="0 0 14 20"><path d="M10.8 4.6L4.2 11.4L10.8 18.2" fill="none" stroke="#cdcdcd" stroke-width="1.6"/></svg>
<svg style="left:322px;top:811px" width="14" height="20" viewBox="0 0 14 20"><path d="M10.8 4.6L4.2 11.4L10.8 18.2" fill="none" stroke="#cdcdcd" stroke-width="1.6"/></svg>
<svg style="left:322px;top:877px" width="14" height="20" viewBox="0 0 14 20"><path d="M10.8 4.6L4.2 11.4L10.8 18.2" fill="none" stroke="#cdcdcd" stroke-width="1.6"/></svg>

<!-- right window edge -->
<div class="a" style="left:2574px;top:0;width:2px;height:1610px;background:#bbccd5"></div>
<svg style="left:2570px;top:0" width="6" height="6" viewBox="0 0 6 6"><path d="M1.4 0H6V6H4Q4 1.4 1.4 0Z" fill="#c3d3db"/></svg>
<svg style="left:0;top:0" width="4" height="4" viewBox="0 0 4 4"><path d="M0 0H2.6Q0.4 0.6 0 3.4Z" fill="#bcdbe8"/></svg>
<div class="a" style="left:0;top:1604px;width:2576px;height:6px;background:linear-gradient(180deg,rgba(0,0,0,0),rgba(0,0,0,.015))"></div>

<!-- ===== TEXT ===== -->
<div class="a" style="left:0;top:0;width:2576px;height:1610px;will-change:transform;z-index:5">
<span class="t" style="left:2126.20px;top:41.20px;font-size:18px;color:#fff;letter-spacing:0.533px;-webkit-text-stroke:0.7px #fff;">2418</span>
<span class="t" style="left:2250.40px;top:41.70px;font-size:16px;color:#d6d6d6;transform:scaleX(0.7441);">paritel</span>
<span class="t" style="left:72.20px;top:180.30px;font-size:24px;color:#111;letter-spacing:0.033px;-webkit-text-stroke:0.5px #111;">Accueil</span>
<span class="t" style="left:64.40px;top:247.00px;font-size:24px;color:#fff;letter-spacing:-0.417px;-webkit-text-stroke:0.5px #fff;">Campagnes SMS</span>
<span class="t" style="left:71.60px;top:318.60px;font-size:22.5px;color:#333;letter-spacing:0.516px;">Campagnes en attente</span>
<span class="t" style="left:71.60px;top:368.93px;font-size:22.5px;color:#14213a;letter-spacing:0.335px;">Campagnes envoyées</span>
<span class="t" style="left:70.60px;top:419.26px;font-size:22.5px;color:#333;letter-spacing:0.225px;">Liens URL</span>
<span class="t" style="left:70.60px;top:469.59px;font-size:22.5px;color:#333;letter-spacing:0.329px;">Réponses</span>
<span class="t" style="left:70.60px;top:519.92px;font-size:22.5px;color:#333;letter-spacing:0.814px;">Rapports</span>
<span class="t" style="left:71.60px;top:570.25px;font-size:22.5px;color:#333;letter-spacing:0.258px;">Suivi des BAT</span>
<span class="t" style="left:70.60px;top:620.58px;font-size:22.5px;color:#333;letter-spacing:0.500px;">Planification en masse</span>
<span class="t" style="left:72.60px;top:670.91px;font-size:22.5px;color:#333;letter-spacing:-0.317px;">API SMS</span>
<span class="t" style="left:70.60px;top:741.00px;font-size:24px;color:#111;letter-spacing:-0.173px;-webkit-text-stroke:0.5px #111;">Bases de données</span>
<span class="t" style="left:71.60px;top:808.00px;font-size:24px;color:#111;letter-spacing:0.112px;-webkit-text-stroke:0.5px #111;">Gestion du compte</span>
<span class="t" style="left:72.60px;top:874.00px;font-size:24px;color:#111;letter-spacing:-0.006px;-webkit-text-stroke:0.5px #111;">Aide et ressources</span>
<span class="t" style="left:70.60px;top:940.80px;font-size:24px;color:#111;letter-spacing:-0.400px;-webkit-text-stroke:0.5px #111;">Roadmap</span>
<span class="t" style="left:399.80px;top:127.60px;font-size:30.5px;color:#66758b;letter-spacing:-1.100px;transform:scaleX(0.9268);">Liste des campagnes SMS</span>
<span class="t" style="left:717.40px;top:129.60px;font-size:29px;color:#1e293b;font-weight:bold;letter-spacing:0.247px;">campagnes envoyées</span>
<span class="t" style="left:448.00px;top:268.25px;font-size:22.5px;color:#fff;letter-spacing:0.425px;">Nouvelle campagne SMS</span>
<span class="t" style="left:2343.00px;top:268.40px;font-size:22.5px;color:#333;letter-spacing:0.571px;">Nouveau dossier</span>
<span class="t" style="left:401.00px;top:345.00px;font-size:23px;color:#111;letter-spacing:0.536px;">Afficher</span>
<span class="t" style="left:502.00px;top:345.00px;font-size:23px;color:#444;letter-spacing:-0.250px;">10</span>
<span class="t" style="left:593.00px;top:345.00px;font-size:23px;color:#111;letter-spacing:0.238px;">éléments | Dossiers :</span>
<span class="t" style="left:838.00px;top:345.00px;font-size:23px;color:#444;letter-spacing:0.250px;">Tous</span>
<span class="t" style="left:2101.00px;top:345.20px;font-size:23px;color:#111;letter-spacing:0.364px;">Rechercher :</span>
<span class="t" style="left:414.00px;top:430.75px;font-size:22.5px;color:#111;font-weight:bold;letter-spacing:0.438px;">Référence</span>
<span class="t" style="left:1203.00px;top:430.75px;font-size:22.5px;color:#111;font-weight:bold;letter-spacing:0.493px;">Date de création</span>
<span class="t" style="left:1605.00px;top:430.75px;font-size:22.5px;color:#111;font-weight:bold;letter-spacing:0.455px;">Date d'envoi</span>
<span class="t" style="left:2410.40px;top:430.75px;font-size:22.5px;color:#111;font-weight:bold;letter-spacing:0.240px;">Volume</span>
<span class="t" style="left:414.00px;top:514.80px;font-size:22.5px;color:#111;letter-spacing:-0.132px;">Campagne collecte avis Toulouse - Copie</span>
<span class="t" style="left:1253.00px;top:514.80px;font-size:22.5px;color:#111;letter-spacing:0.300px;">18/03/2026</span>
<span class="t" style="left:1594.00px;top:514.80px;font-size:22.5px;color:#111;letter-spacing:0.050px;">18/03/2026 à 16:59</span>
<span class="t" style="left:2514.60px;top:514.80px;font-size:22.5px;color:#111;letter-spacing:0.100px;">3</span>
<span class="t" style="left:414.00px;top:610.70px;font-size:22.5px;color:#111;letter-spacing:-0.190px;">Campagne collecte avis Toulouse</span>
<span class="t" style="left:1253.00px;top:610.70px;font-size:22.5px;color:#111;letter-spacing:0.300px;">18/03/2026</span>
<span class="t" style="left:1594.00px;top:610.70px;font-size:22.5px;color:#111;letter-spacing:0.050px;">18/03/2026 à 16:17</span>
<span class="t" style="left:2514.60px;top:610.70px;font-size:22.5px;color:#111;letter-spacing:0.100px;">4</span>
<span class="t" style="left:414.00px;top:706.60px;font-size:22.5px;color:#111;letter-spacing:-0.020px;">Site internet Sept 25</span>
<span class="t" style="left:1253.50px;top:706.60px;font-size:22.5px;color:#111;letter-spacing:0.300px;">30/09/2025</span>
<span class="t" style="left:1594.00px;top:706.60px;font-size:22.5px;color:#111;letter-spacing:0.050px;">30/09/2025 à 15:03</span>
<span class="t" style="left:2470.60px;top:706.60px;font-size:22.5px;color:#111;letter-spacing:0.100px;">5 250</span>
<span class="t" style="left:414.00px;top:802.50px;font-size:22.5px;color:#111;letter-spacing:-0.038px;">Creation site internet</span>
<span class="t" style="left:1253.50px;top:802.50px;font-size:22.5px;color:#111;letter-spacing:0.300px;">23/06/2025</span>
<span class="t" style="left:1593.50px;top:802.50px;font-size:22.5px;color:#111;letter-spacing:0.050px;">24/06/2025 à 14:30</span>
<span class="t" style="left:2470.60px;top:802.50px;font-size:22.5px;color:#111;letter-spacing:0.100px;">5 303</span>
<span class="t" style="left:414.00px;top:898.40px;font-size:22.5px;color:#111;letter-spacing:-0.336px;">Lot 13 - SMS</span>
<span class="t" style="left:1253.50px;top:898.40px;font-size:22.5px;color:#111;letter-spacing:0.300px;">26/05/2025</span>
<span class="t" style="left:1594.00px;top:898.40px;font-size:22.5px;color:#111;letter-spacing:0.050px;">05/06/2025 à 14:30</span>
<span class="t" style="left:2489.60px;top:898.40px;font-size:22.5px;color:#111;letter-spacing:0.100px;">232</span>
<span class="t" style="left:414.00px;top:994.30px;font-size:22.5px;color:#111;letter-spacing:-0.418px;">Lot 12 - SMS</span>
<span class="t" style="left:1253.50px;top:994.30px;font-size:22.5px;color:#111;letter-spacing:0.300px;">26/05/2025</span>
<span class="t" style="left:1594.00px;top:994.30px;font-size:22.5px;color:#111;letter-spacing:0.050px;">03/06/2025 à 14:30</span>
<span class="t" style="left:2489.60px;top:994.30px;font-size:22.5px;color:#111;letter-spacing:0.100px;">299</span>
<span class="t" style="left:414.00px;top:1090.20px;font-size:22.5px;color:#111;letter-spacing:-0.455px;">Lot 11 - SMS</span>
<span class="t" style="left:1253.50px;top:1090.20px;font-size:22.5px;color:#111;letter-spacing:0.300px;">26/05/2025</span>
<span class="t" style="left:1594.00px;top:1090.20px;font-size:22.5px;color:#111;letter-spacing:0.050px;">30/05/2025 à 14:17</span>
<span class="t" style="left:2489.60px;top:1090.20px;font-size:22.5px;color:#111;letter-spacing:0.100px;">300</span>
<span class="t" style="left:414.00px;top:1186.10px;font-size:22.5px;color:#111;letter-spacing:-0.336px;">Lot 10 - SMS</span>
<span class="t" style="left:1253.50px;top:1186.10px;font-size:22.5px;color:#111;letter-spacing:0.300px;">22/05/2025</span>
<span class="t" style="left:1593.50px;top:1186.10px;font-size:22.5px;color:#111;letter-spacing:0.050px;">27/05/2025 à 14:30</span>
<span class="t" style="left:2489.60px;top:1186.10px;font-size:22.5px;color:#111;letter-spacing:0.100px;">299</span>
<span class="t" style="left:414.00px;top:1282.00px;font-size:22.5px;color:#111;letter-spacing:-0.120px;">Lot 9 - SMS</span>
<span class="t" style="left:1253.50px;top:1282.00px;font-size:22.5px;color:#111;letter-spacing:0.300px;">22/05/2025</span>
<span class="t" style="left:1593.50px;top:1282.00px;font-size:22.5px;color:#111;letter-spacing:0.050px;">26/05/2025 à 14:30</span>
<span class="t" style="left:2489.60px;top:1282.00px;font-size:22.5px;color:#111;letter-spacing:0.100px;">300</span>
<span class="t" style="left:415.00px;top:1377.90px;font-size:22.5px;color:#111;letter-spacing:-0.413px;">Annonce S.Leblanc</span>
<span class="t" style="left:1253.50px;top:1377.90px;font-size:22.5px;color:#111;letter-spacing:0.300px;">22/05/2025</span>
<span class="t" style="left:1593.50px;top:1377.90px;font-size:22.5px;color:#111;letter-spacing:0.050px;">22/05/2025 à 14:30</span>
<span class="t" style="left:2502.60px;top:1377.90px;font-size:22.5px;color:#111;letter-spacing:0.100px;">66</span>
<span class="t" style="left:401.20px;top:1465.00px;font-size:22px;color:#111;letter-spacing:0.025px;">Affichage de l'élement 1 à 10 sur 58 éléments</span>
<span class="t" style="left:2004.00px;top:1469.20px;font-size:21.5px;color:#6c757d;letter-spacing:0.762px;">Précédent</span>
<span class="t" style="left:2144.00px;top:1469.20px;font-size:21.5px;color:#fff;">1</span>
<span class="t" style="left:2193.10px;top:1469.20px;font-size:21.5px;color:#6c757d;">2</span>
<span class="t" style="left:2244.00px;top:1469.20px;font-size:21.5px;color:#6c757d;">3</span>
<span class="t" style="left:2295.50px;top:1469.20px;font-size:21.5px;color:#6c757d;">4</span>
<span class="t" style="left:2345.20px;top:1469.20px;font-size:21.5px;color:#6c757d;">5</span>
<span class="t" style="left:2396.00px;top:1469.20px;font-size:21.5px;color:#6c757d;">6</span>
<span class="t" style="left:2447.60px;top:1469.20px;font-size:21.5px;color:#6c757d;letter-spacing:0.383px;">Suivant</span>
<span class="t" style="left:33.00px;top:1568.40px;font-size:20px;color:#444;letter-spacing:0.464px;">2026 © Ediware.</span>
</div>
</body>
</html>
